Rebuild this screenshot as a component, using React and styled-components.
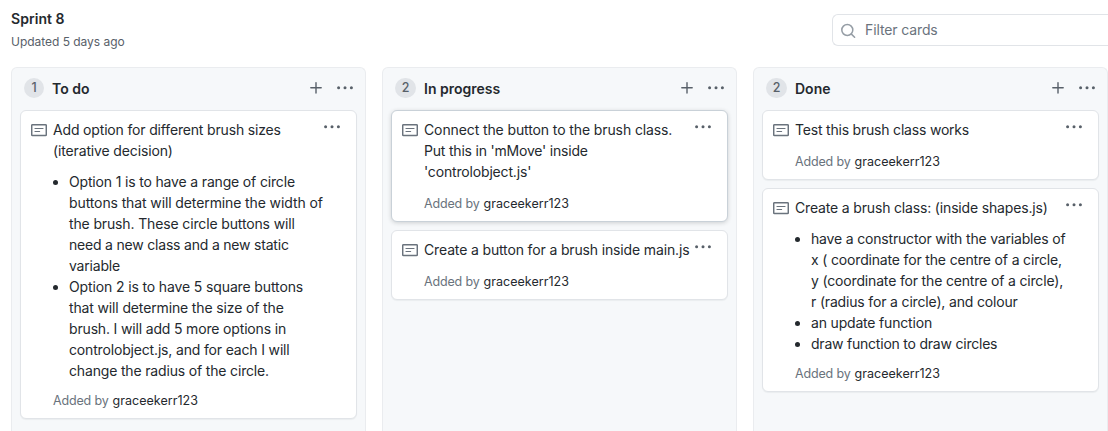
import React from "react";
import styled, { createGlobalStyle } from "styled-components";

const GlobalStyle = createGlobalStyle`
  * { box-sizing: border-box; }
  html, body { margin: 0; height: 100%; overflow: hidden; }
  body {
    background: #fff;
    color: #24292e;
    font: 14px/21px Inter, "Liberation Sans", sans-serif;
  }
`;

const Page = styled.main`
  display: flex;
  flex-direction: column;
  height: 431px;
  overflow: hidden;
`;

const Header = styled.header`
  flex: none;
  display: flex;
  justify-content: space-between;
  height: 67px;
  padding-left: 11px;
`;

const Heading = styled.div`
  padding-top: 8px;
`;

const BoardTitle = styled.h1`
  margin: 0;
  font-size: 14px;
  line-height: 22px;
  font-weight: 600;
  letter-spacing: 0.05px;
  white-space: nowrap;
`;

const Updated = styled.div`
  margin-top: 3px;
  font-size: 12px;
  line-height: 18px;
  letter-spacing: -0.03px;
  color: #586069;
  white-space: nowrap;
`;

const SearchBox = styled.div`
  display: flex;
  align-items: center;
  gap: 9px;
  width: 276px;
  height: 32px;
  margin-top: 14px;
  padding: 0 0 1px 8px;
  border: 1px solid #e1e4e8;
  border-right: 0;
  border-radius: 6px 0 0 6px;
  color: #6a737d;
`;

const Board = styled.div`
  flex: 1;
  display: flex;
  gap: 16px;
  min-height: 0;
  padding-left: 11px;
`;

const ColumnBox = styled.section`
  flex: none;
  width: 355px;
  padding: 0 8px;
  border: 1px solid #eaecef;
  border-bottom: 0;
  border-radius: 6px 6px 0 0;
  background: #f6f8fa;
`;

const ColumnHead = styled.div`
  display: flex;
  align-items: center;
  height: 42px;
  padding: 0 3px 2px 4px;
`;

const Counter = styled.span`
  width: ${(p) => p.$width}px;
  height: 20px;
  border-radius: 10px;
  background: #e1e4e8;
  color: #586069;
  font-size: 12.5px;
  line-height: 19px;
  font-weight: 500;
  text-align: center;
`;

const ColumnTitle = styled.h2`
  flex: 1;
  margin: 2px 0 0 8px;
  font-size: 14px;
  line-height: 20px;
  font-weight: 600;
`;

const HeadActions = styled.div`
  display: flex;
  align-items: center;
  gap: 12px;
  color: #586069;
`;

const CardList = styled.div`
  display: flex;
  flex-direction: column;
  gap: 8px;
`;

const CardBox = styled.article`
  display: flex;
  padding: 8px 15px 8px 10px;
  border: 1px solid ${(p) => (p.$active ? "#c9d1d8" : "#e1e4e8")};
  border-radius: 6px;
  background: #fff;
  box-shadow: ${(p) =>
    p.$active ? "0 1px 4px rgba(27, 31, 35, 0.18)" : "0 1px 1px rgba(27, 31, 35, 0.05)"};
`;

const NoteSlot = styled.span`
  flex: none;
  width: 22px;
  height: 16px;
  padding-top: 3px;
  color: #6a737d;
`;

const CardBody = styled.div`
  flex: 1;
  min-width: 0;
`;

const MenuSlot = styled.span`
  flex: none;
  height: 16px;
  color: #586069;
`;

const Line = styled.span`
  display: block;
  white-space: nowrap;
  letter-spacing: ${(p) => p.$track ?? -0.165}px;
`;

const Bullets = styled.ul`
  margin: 10px 0 -2px;
  padding-left: 16px;
`;

const Footer = styled.div`
  margin-top: 12px;
  height: 19px;
  font-size: 12.5px;
  line-height: 19px;
  letter-spacing: -0.15px;
  color: #6a737d;
  white-space: nowrap;
`;

const Author = styled.span`
  margin-left: 0.5px;
  color: #24292e;
  letter-spacing: 0.03px;
`;

const Svg = styled.svg`
  display: block;
  flex: none;
  fill: ${(p) => (p.$outline ? "none" : "currentColor")};
  stroke: ${(p) => (p.$outline ? "currentColor" : "none")};
  stroke-linecap: round;
`;

const SearchSvg = styled(Svg)`
  color: #959da5;
`;

const PlusIcon = () => (
  <Svg $outline width="16" height="16" viewBox="0 0 16 16" strokeWidth="1.4">
    <path d="M8 2.6v10.4M2.8 7.8h10.4" />
  </Svg>
);

const DotsIcon = () => (
  <Svg width="18" height="16" viewBox="0 0 18 16">
    <circle cx="2.6" cy="7.7" r="1.5" />
    <circle cx="9" cy="7.7" r="1.5" />
    <circle cx="15.4" cy="7.7" r="1.5" />
  </Svg>
);

const NoteIcon = () => (
  <Svg $outline width="16" height="16" viewBox="0 0 16 16">
    <rect x="0.7" y="2.7" width="14.6" height="10.8" rx="0.8" strokeWidth="1.5" />
    <path d="M4 6.5h8M4 9.5h4.6" strokeWidth="1.2" />
  </Svg>
);

const SearchIcon = () => (
  <SearchSvg $outline width="15" height="16" viewBox="0 0 15 16" strokeWidth="1.5">
    <circle cx="6.3" cy="8" r="5.5" />
    <path d="M10.4 12.1l3.2 3.2" />
  </SearchSvg>
);

const columns = [
  {
    name: "To do",
    counterWidth: 20,
    cards: [
      {
        title: [["Add option for different brush sizes"], ["(iterative decision)", -0.14]],
        bullets: [
          [
            ["Option 1 is to have a range of circle"],
            ["buttons that will determine the width of", -0.11],
            ["the brush. These circle buttons will", -0.14],
            ["need a new class and a new static", -0.2],
            ["variable", -0.2],
          ],
          [
            ["Option 2 is to have 5 square buttons", -0.13],
            ["that will determine the size of the", -0.14],
            ["brush. I will add 5 more options in"],
            ["controlobject.js, and for each I will"],
            ["change the radius of the circle."],
          ],
        ],
      },
    ],
  },
  {
    name: "In progress",
    counterWidth: 21,
    cards: [
      {
        active: true,
        title: [
          ["Connect the button to the brush class.", -0.11],
          ["Put this in 'mMove' inside", -0.2],
          ["'controlobject.js'"],
        ],
      },
      { title: [["Create a button for a brush inside main.js", -0.145]] },
    ],
  },
  {
    name: "Done",
    counterWidth: 21,
    cards: [
      { title: [["Test this brush class works", -0.2]] },
      {
        title: [["Create a brush class: (inside shapes.js)"]],
        bullets: [
          [
            ["have a constructor with the variables of", -0.18],
            ["x ( coordinate for the centre of a circle,"],
            ["y (coordinate for the centre of a circle),"],
            ["r (radius for a circle), and colour"],
          ],
          [["an update function", -0.18]],
          [["draw function to draw circles", -0.22]],
        ],
      },
    ],
  },
];

const Lines = ({ lines }) =>
  lines.map(([text, track]) => (
    <Line key={text} $track={track}>
      {text}
    </Line>
  ));

const Card = ({ card }) => (
  <CardBox $active={card.active}>
    <NoteSlot>
      <NoteIcon />
    </NoteSlot>
    <CardBody>
      <Lines lines={card.title} />
      {card.bullets && (
        <Bullets>
          {card.bullets.map((lines) => (
            <li key={lines[0][0]}>
              <Lines lines={lines} />
            </li>
          ))}
        </Bullets>
      )}
      <Footer>
        Added by <Author>graceekerr123</Author>
      </Footer>
    </CardBody>
    <MenuSlot>
      <DotsIcon />
    </MenuSlot>
  </CardBox>
);

export default function App() {
  return (
    <Page>
      <GlobalStyle />
      <Header>
        <Heading>
          <BoardTitle>Sprint 8</BoardTitle>
          <Updated>Updated 5 days ago</Updated>
        </Heading>
        <SearchBox>
          <SearchIcon />
          <Line $track={-0.12}>Filter cards</Line>
        </SearchBox>
      </Header>
      <Board>
        {columns.map((c) => (
          <ColumnBox key={c.name}>
            <ColumnHead>
              <Counter $width={c.counterWidth}>{c.cards.length}</Counter>
              <ColumnTitle>{c.name}</ColumnTitle>
              <HeadActions>
                <PlusIcon />
                <DotsIcon />
              </HeadActions>
            </ColumnHead>
            <CardList>
              {c.cards.map((card) => (
                <Card key={card.title[0][0]} card={card} />
              ))}
            </CardList>
          </ColumnBox>
        ))}
      </Board>
    </Page>
  );
}
